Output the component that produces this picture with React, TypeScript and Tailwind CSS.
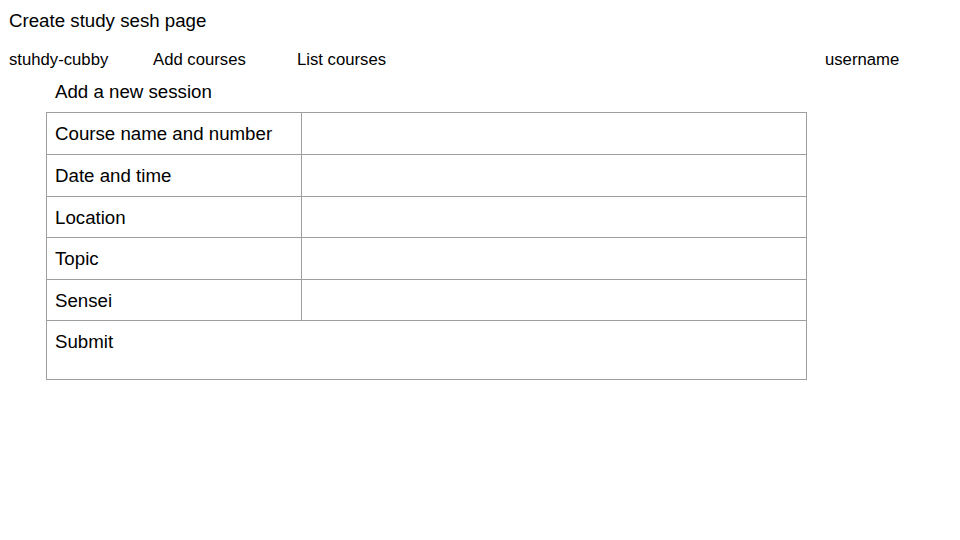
const rows = [
  { label: 'Course name and number', h: 'h-[42px]' },
  { label: 'Date and time', h: 'h-[42px]' },
  { label: 'Location', h: 'h-[41px]' },
  { label: 'Topic', h: 'h-[42px]' },
  { label: 'Sensei', h: 'h-[41px]' },
];

export default function App() {
  return (
    <div className="w-[960px] h-[540px] bg-white text-black font-['Liberation_Sans',Arial,sans-serif] overflow-hidden">
      <h1 className="pt-[10px] pl-[9px] text-[18.7px] leading-[21px]">Create study sesh page</h1>

      <nav className="mt-[20px] flex pl-[9px] text-[16.7px] leading-[18px]">
        <a className="w-[144px]">stuhdy-cubby</a>
        <a className="w-[144px]">Add courses</a>
        <a className="flex-1">List courses</a>
        <span className="w-[135px]">username</span>
      </nav>

      <div className="ml-[46px] w-[761px]">
        <h2 className="mt-[12px] pl-[9px] text-[18.7px] leading-[21px]">Add a new session</h2>

        <form className="mt-[10px] border border-[#9e9e9e] border-b-0">
          {rows.map((r) => (
            <div key={r.label} className={`flex ${r.h} border-b border-[#9e9e9e]`}>
              <label className="w-[255px] shrink-0 flex items-center pl-[8px] border-r border-[#9e9e9e] text-[18.7px] leading-[21px]">
                {r.label}
              </label>
              <div className="flex-1" />
            </div>
          ))}
          <div className="h-[59px] border-b border-[#9e9e9e] pl-[8px] pt-[10px] text-[18.7px] leading-[21px]">
            Submit
          </div>
        </form>
      </div>
    </div>
  );
}
